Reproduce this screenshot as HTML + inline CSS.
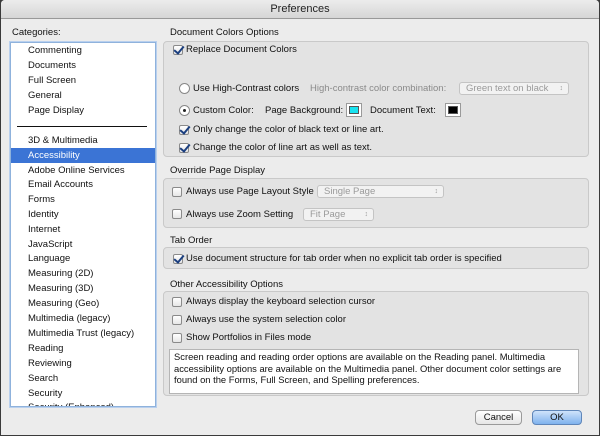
<!DOCTYPE html>
<html><head><meta charset="utf-8"><style>
*{margin:0;padding:0;box-sizing:border-box}
body{width:600px;height:436px;overflow:hidden;background:#3a3a3a;font-family:"Liberation Sans",sans-serif;font-size:9.5px;color:#111}
#win{position:absolute;left:1px;top:0;width:598px;height:435px;background:#ececec;border-radius:4px 4px 0 0;overflow:hidden}
#title{position:absolute;left:0;top:0;width:598px;height:19px;background:linear-gradient(#ececec,#d6d6d6);border-bottom:1px solid #999;text-align:center;font-size:11px;line-height:19px;color:#222}
.t{position:absolute;white-space:nowrap;line-height:12px}
.g{color:#8a8a8a}
.box{position:absolute;background:#e3e3e3;border:1px solid #c9c9c9;border-radius:4px}
#list{position:absolute;left:9px;top:42px;width:146px;height:365px;background:#fff;border:1px solid #8fb2dc;box-shadow:0 0 0 1px #b9d0ee;overflow:hidden}
#list .t{left:17px}
.sel{position:absolute;left:0;top:105px;width:144px;height:15px;background:#3b74d5}
.cb{position:absolute;width:10px;height:10px;border:1px solid #8a8a8a;border-radius:2px;background:linear-gradient(#fff,#e6e6e6)}
.cb.on::after{content:"";position:absolute;left:2px;top:-2px;width:4px;height:8px;border:solid #1b3f80;border-width:0 2px 2px 0;transform:rotate(40deg)}
.rb{position:absolute;width:11px;height:11px;border:1px solid #888;border-radius:50%;background:#fff}
.rb.on::after{content:"";position:absolute;left:3px;top:3px;width:3px;height:3px;border-radius:50%;background:#222}
.pop{position:absolute;height:13px;border:1px solid #c4c4c4;border-radius:3px;background:#f2f2f2;color:#9a9a9a;padding-left:6px;line-height:11px}
.pop::after{content:"\2195";position:absolute;right:5px;top:0;font-size:7px}
.sw{position:absolute;width:16px;height:14px;border:1px solid #9a9a9a;background:#fff}
.sw i{position:absolute;left:2px;top:2px;width:10px;height:8px;border:1px solid #555}
.btn{position:absolute;height:15px;border:1px solid #9a9a9a;border-radius:4px;background:linear-gradient(#fff,#e6e6e6);text-align:center;line-height:13px}
</style></head><body><div id="win">
<div id="title">Preferences</div>
<div class="t" style="left:11px;top:27px">Categories:</div>
<div id="list">
<div class="sel"></div>
<div class="t" style="top:2px">Commenting</div>
<div class="t" style="top:17px">Documents</div>
<div class="t" style="top:32px">Full Screen</div>
<div class="t" style="top:47px">General</div>
<div class="t" style="top:62px">Page Display</div>
<div style="position:absolute;left:6px;top:83px;width:130px;height:1px;background:#111"></div>
<div class="t" style="top:92px">3D &amp; Multimedia</div>
<div class="t" style="top:107px;color:#fff">Accessibility</div>
<div class="t" style="top:122px">Adobe Online Services</div>
<div class="t" style="top:136px">Email Accounts</div>
<div class="t" style="top:151px">Forms</div>
<div class="t" style="top:166px">Identity</div>
<div class="t" style="top:181px">Internet</div>
<div class="t" style="top:196px">JavaScript</div>
<div class="t" style="top:210px">Language</div>
<div class="t" style="top:225px">Measuring (2D)</div>
<div class="t" style="top:240px">Measuring (3D)</div>
<div class="t" style="top:255px">Measuring (Geo)</div>
<div class="t" style="top:270px">Multimedia (legacy)</div>
<div class="t" style="top:285px">Multimedia Trust (legacy)</div>
<div class="t" style="top:300px">Reading</div>
<div class="t" style="top:315px">Reviewing</div>
<div class="t" style="top:330px">Search</div>
<div class="t" style="top:345px">Security</div>
<div class="t" style="top:359px">Security (Enhanced)</div>
</div>

<div class="t" style="left:169px;top:27px">Document Colors Options</div>
<div class="box" style="left:162px;top:41px;width:426px;height:116px"></div>
<div class="cb on" style="left:172px;top:45px"></div>
<div class="t" style="left:185px;top:44px">Replace Document Colors</div>
<div class="rb" style="left:178px;top:83px"></div>
<div class="t" style="left:192px;top:83px">Use High-Contrast colors</div>
<div class="t g" style="left:309px;top:83px">High-contrast color combination:</div>
<div class="pop" style="left:458px;top:82px;width:110px">Green text on black</div>
<div class="rb on" style="left:178px;top:105px"></div>
<div class="t" style="left:192px;top:105px">Custom Color:</div>
<div class="t" style="left:264px;top:105px">Page Background:</div>
<div class="sw" style="left:345px;top:103px"><i style="background:#19e3f0"></i></div>
<div class="t" style="left:369px;top:105px">Document Text:</div>
<div class="sw" style="left:444px;top:103px"><i style="background:#000"></i></div>
<div class="cb on" style="left:178px;top:125px"></div>
<div class="t" style="left:192px;top:124px">Only change the color of black text or line art.</div>
<div class="cb on" style="left:178px;top:143px"></div>
<div class="t" style="left:192px;top:142px">Change the color of line art as well as text.</div>

<div class="t" style="left:169px;top:165px">Override Page Display</div>
<div class="box" style="left:162px;top:178px;width:426px;height:50px"></div>
<div class="cb" style="left:171px;top:187px"></div>
<div class="t" style="left:185px;top:186px">Always use Page Layout Style</div>
<div class="pop" style="left:316px;top:185px;width:127px">Single Page</div>
<div class="cb" style="left:171px;top:209px"></div>
<div class="t" style="left:185px;top:209px">Always use Zoom Setting</div>
<div class="pop" style="left:302px;top:208px;width:71px">Fit Page</div>

<div class="t" style="left:169px;top:235px">Tab Order</div>
<div class="box" style="left:162px;top:247px;width:426px;height:22px"></div>
<div class="cb on" style="left:172px;top:254px"></div>
<div class="t" style="left:185px;top:253px">Use document structure for tab order when no explicit tab order is specified</div>

<div class="t" style="left:169px;top:279px">Other Accessibility Options</div>
<div class="box" style="left:162px;top:291px;width:426px;height:105px"></div>
<div class="cb" style="left:171px;top:297px"></div>
<div class="t" style="left:185px;top:296px">Always display the keyboard selection cursor</div>
<div class="cb" style="left:171px;top:315px"></div>
<div class="t" style="left:185px;top:314px">Always use the system selection color</div>
<div class="cb" style="left:171px;top:333px"></div>
<div class="t" style="left:185px;top:332px">Show Portfolios in Files mode</div>
<div style="position:absolute;left:168px;top:349px;width:410px;height:45px;background:#fff;border:1px solid #b5b5b5;padding:1px 4px;line-height:11.5px;font-size:9.4px">Screen reading and reading order options are available on the Reading panel. Multimedia accessibility options are available on the Multimedia panel. Other document color settings are found on the Forms, Full Screen, and Spelling preferences.</div>

<div class="btn" style="left:474px;top:410px;width:47px">Cancel</div>
<div class="btn" style="left:531px;top:410px;width:50px;background:linear-gradient(#cfe3fb,#7fb2ee);border-color:#5f86b9">OK</div>
</div></body></html>
